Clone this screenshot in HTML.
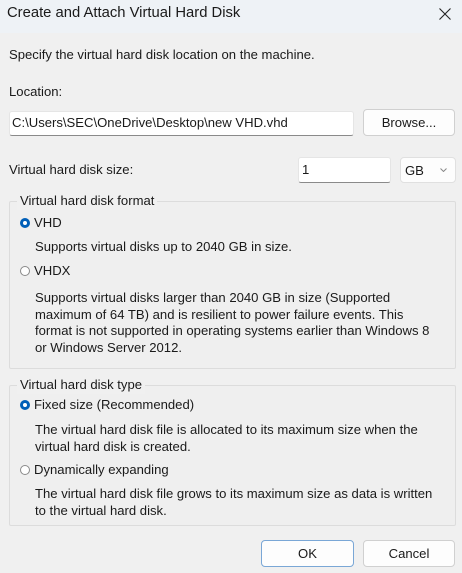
<!DOCTYPE html>
<html><head><style>
*{margin:0;padding:0;box-sizing:border-box}
body{width:462px;height:573px;background:#f0f0f0;font-family:"Liberation Sans",sans-serif;font-size:13.1px;color:#1a1a1a;position:relative;overflow:hidden}
.a{position:absolute;white-space:nowrap;line-height:16.5px}
.title{position:absolute;left:0;top:0;width:462px;height:33px;background:#eef2f6}
.box{position:absolute;border:1px solid #dcdcdc;background:#efefef;border-radius:2px}
.inp{position:absolute;background:#fff;border:1px solid #e5e5e5;border-bottom:1px solid #8a8a8a;border-radius:3px}
.btn{position:absolute;background:#fdfdfd;border:1px solid #d0d0d0;border-radius:4px;text-align:center;line-height:25px}
.r{position:absolute;width:10px;height:10px;border-radius:50%}
.on{border:3px solid #005fb8;background:#fff}
.off{border:1px solid #8a8a8a;background:#fff}
</style></head><body>
<div class="title"></div>
<div class="a" style="left:7px;top:5px;font-size:14.8px">Create and Attach Virtual Hard Disk</div>
<svg style="position:absolute;left:439px;top:8px" width="12" height="12"><path d="M0.5 0.5L11.5 11.5M11.5 0.5L0.5 11.5" stroke="#222" stroke-width="1.1"/></svg>
<div class="a" style="left:9px;top:47px">Specify the virtual hard disk location on the machine.</div>
<div class="a" style="left:9px;top:84px">Location:</div>
<div class="inp" style="left:9px;top:111px;width:345px;height:25px"></div>
<div class="a" style="left:12px;top:115px">C:\Users\SEC\OneDrive\Desktop\new VHD.vhd</div>
<div class="btn" style="left:363px;top:109px;width:92px;height:27px">Browse...</div>
<div class="a" style="left:9px;top:162px">Virtual hard disk size:</div>
<div class="inp" style="left:298px;top:157px;width:93px;height:26px"></div>
<div class="a" style="left:302px;top:162px">1</div>
<div class="btn" style="left:400px;top:157px;width:56px;height:26px;text-align:left;padding-left:4px;border-color:#e0e0e0">GB</div>
<svg style="position:absolute;left:440px;top:168px" width="7" height="4"><path d="M0.5 0.5L3.5 3.5L6.5 0.5" stroke="#888" fill="none"/></svg>

<div class="box" style="left:9px;top:201px;width:447px;height:168px"></div>
<div class="a" style="left:17px;top:193px;background:#f0f0f0;padding:0 3px">Virtual hard disk format</div>
<div class="r on" style="left:20px;top:218px"></div>
<div class="a" style="left:34px;top:215px">VHD</div>
<div class="a" style="left:35px;top:239px">Supports virtual disks up to 2040 GB in size.</div>
<div class="r off" style="left:20px;top:266px"></div>
<div class="a" style="left:34px;top:263px">VHDX</div>
<div class="a" style="left:35px;top:290px">Supports virtual disks larger than 2040 GB in size (Supported<br>maximum of 64 TB) and is resilient to power failure events. This<br>format is not supported in operating systems earlier than Windows 8<br>or Windows Server 2012.</div>

<div class="box" style="left:9px;top:385px;width:447px;height:141px"></div>
<div class="a" style="left:17px;top:377px;background:#f0f0f0;padding:0 3px">Virtual hard disk type</div>
<div class="r on" style="left:20px;top:400px"></div>
<div class="a" style="left:34px;top:397px">Fixed size (Recommended)</div>
<div class="a" style="left:35px;top:422px">The virtual hard disk file is allocated to its maximum size when the<br>virtual hard disk is created.</div>
<div class="r off" style="left:20px;top:465px"></div>
<div class="a" style="left:34px;top:462px">Dynamically expanding</div>
<div class="a" style="left:35px;top:486px">The virtual hard disk file grows to its maximum size as data is written<br>to the virtual hard disk.</div>

<div class="btn" style="left:261px;top:540px;width:93px;height:27px;border-color:#7aa7d6">OK</div>
<div class="btn" style="left:363px;top:540px;width:92px;height:27px">Cancel</div>
</body></html>
